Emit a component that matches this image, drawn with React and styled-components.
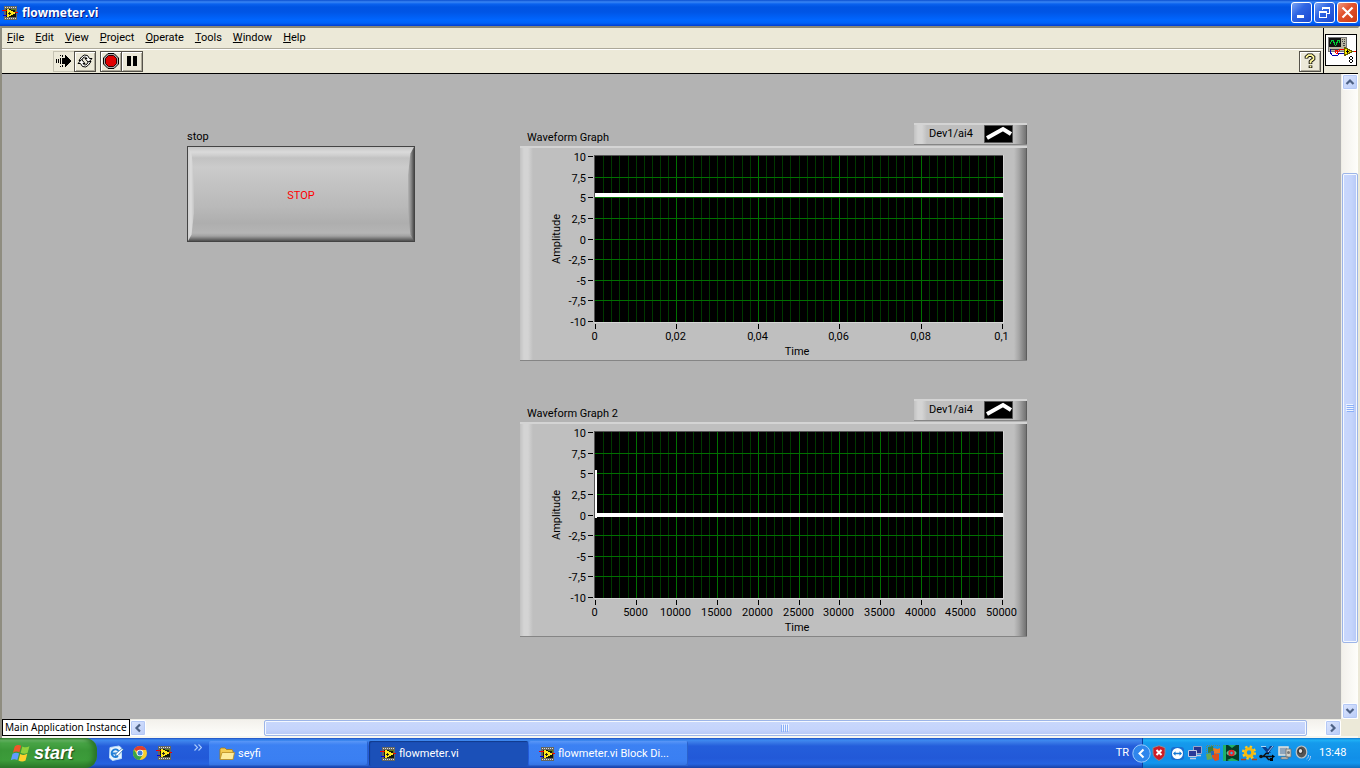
import React from 'react';
import styled, { createGlobalStyle, css } from 'styled-components';

const Global = createGlobalStyle`
  *, *::before, *::after { box-sizing: border-box; }
  html, body, #root { height: 100%; }
  body { margin: 0; font: 11px/14px Roboto, "Liberation Sans", sans-serif; color: #000; overflow: hidden; }
  button { font: inherit; color: inherit; padding: 0; margin: 0; border: 0; background: none; }
  a { color: inherit; text-decoration: none; }
  svg { display: block; flex: none; }
`;

const Desktop = styled.div`
  display: flex;
  flex-direction: column;
  height: 100%;
  min-height: 100%;
`;

const TitleBar = styled.header`
  display: flex;
  align-items: center;
  height: 26px;
  flex: none;
  padding: 0 2px 1px 2px;
  gap: 4px;
  background: linear-gradient(#0a4fd0 0, #3a86f4 2px, #0a62ee 4px, #0054e3 7px, #0055e5 12px, #0066ff 20px, #0062f8 23px, #003dd0 26px);
`;

const Title = styled.h1`
  flex: 1;
  margin: 0;
  font: bold 12px/26px "Open Sans", "Noto Sans", sans-serif;
  color: #fff;
  text-shadow: 1px 1px 0 #0a1883;
`;

const Captions = styled.div`
  display: flex;
  gap: 2px;
`;

const CaptionButton = styled.button`
  display: grid;
  place-items: center;
  width: 21px;
  height: 21px;
  border: 1px solid #fff;
  border-radius: 3px;
  background: ${(p) => (p.$close
    ? 'linear-gradient(135deg, #f09a80, #e2542f 40%, #cc3a12)'
    : 'linear-gradient(135deg, #7ba4f4, #2f66e4 40%, #1a48d0)')};
`;

const Frame = styled.main`
  display: flex;
  flex-direction: column;
  flex: 1;
  min-height: 0;
  border: solid #8f8d80;
  border-width: 2px 0 0 2px;
  border-top-color: #8a8776;
  border-right: 2px solid #ece9d8;
  background: #ece9d8;
`;

const Chrome = styled.div`
  display: flex;
  flex: none;
  border-bottom: 1px solid #000;
`;

const Bars = styled.div`
  flex: 1;
`;

const MenuBar = styled.nav`
  display: flex;
  align-items: center;
  gap: 11px;
  height: 20px;
  padding-left: 5px;
`;

const MenuItem = styled.button`
  line-height: 18px;
`;

const ToolBar = styled.div`
  display: flex;
  align-items: center;
  height: 25px;
  padding: 0 3px 0 51px;
  border-top: 1px solid #aca899;
  box-shadow: inset 0 1px 0 #fff;
`;

const ToolButton = styled.button`
  display: grid;
  place-items: center;
  width: 22px;
  height: 21px;
  margin-right: -1px;
  border: 1px solid #55524a;
  box-shadow: inset 1px 1px 0 #fff, inset -1px -1px 0 #aca899;
  background: #ece9d8;
  ${(p) => p.$flat && css`
    border-color: #c5c2b2;
    box-shadow: none;
  `}
  ${(p) => p.$gap && css`
    margin-left: 5px;
  `}
  ${(p) => p.$end && css`
    margin-left: auto;
  `}
`;

const IconPane = styled.div`
  display: grid;
  place-items: center;
  width: 35px;
  padding-bottom: 2px;
  border-left: 1px solid #000;
`;

const Workspace = styled.div`
  display: flex;
  flex: 1;
  min-height: 0;
`;

const FrontPanel = styled.section`
  display: flex;
  align-items: flex-start;
  flex: 1;
  min-width: 0;
  overflow: hidden;
  padding: 49px 0 0 184px;
  gap: 105px;
  background: #b3b3b3;
`;

const StopControl = styled.div`
  display: flex;
  flex-direction: column;
  padding: 7px 0 0 1px;
  gap: 2px;
`;

const StopButton = styled.button`
  position: relative;
  width: 228px;
  height: 96px;
  padding-top: 3px;
  border: 1px solid #444;
  color: #f00;
  background:
    linear-gradient(#b6b6b600, #a2a2a2 3px, #4e4e4e 8px) bottom / 100% 8px no-repeat,
    linear-gradient(#c6c6c6, #dadada 5px, #d0d0d0 8px, #c2c2c2 11px, #cbcbcb 20px, #c6c6c6 30px, #b9b9b9 60px, #aeaeae 76px, #b6b6b6 88px);

  &::before, &::after {
    content: '';
    position: absolute;
    top: 0;
    bottom: 0;
    width: 6px;
  }
  &::before {
    left: 0;
    background: linear-gradient(90deg, #d0d0d0, #dcdcdc 3px, #c4c4c4 6px);
    clip-path: polygon(0 0, 60% 7%, 100% 30%, 100% 70%, 60% 93%, 0 100%);
  }
  &::after {
    right: 0;
    background: linear-gradient(90deg, #b4b4b4, #8a8a8a 3px, #4a4a4a 6px);
    clip-path: polygon(100% 0, 40% 7%, 0 30%, 0 70%, 40% 93%, 100% 100%);
  }
`;

const GraphColumn = styled.div`
  display: flex;
  flex-direction: column;
  gap: 38px;
`;

const GraphBlock = styled.figure`
  margin: 0;
  width: 507px;
`;

const GraphHead = styled.figcaption`
  display: flex;
  align-items: flex-start;
  justify-content: space-between;
  height: 23px;
  padding-left: 7px;
  line-height: 30px;
`;

const raised = css`
  border-top: 2px solid #d4d4d4;
  border-bottom: 1px solid #858585;
  background:
    linear-gradient(90deg, #c2c2c2, #d4d4d4 4px, #d4d4d4 8px, #bfbfbf 13px) left / 13px 100% no-repeat,
    linear-gradient(90deg, #bfbfbf, #a5a5a5 5px, #888 9px, #737373 12px, #484848 13px) right / 13px 100% no-repeat,
    #bfbfbf;
`;

const Legend = styled.div`
  ${raised}
  display: flex;
  align-items: flex-start;
  justify-content: space-between;
  width: 113px;
  height: 22px;
  padding: 0 14px 0 15px;
  line-height: 18px;
`;

const GraphBody = styled.div`
  ${raised}
  height: 215px;
`;

const scrollFace = css`
  border: 1px solid #fff;
  border-radius: 2px;
  box-shadow: inset 0 0 0 1px #b4c8f6;
`;

const ScrollRail = styled.div`
  display: flex;
  flex: ${(p) => (p.$vertical ? 'none' : '1')};
  flex-direction: ${(p) => (p.$vertical ? 'column' : 'row')};
  ${(p) => (p.$vertical ? 'width' : 'height')}: 17px;
  border: solid #eeede5;
  border-width: ${(p) => (p.$vertical ? '0 0 0 1px' : '1px 0 0 0')};
  background: linear-gradient(${(p) => (p.$vertical ? '90deg' : '180deg')}, #f3f1ec, #fefefb);
`;

const ScrollArrow = styled.button`
  ${scrollFace}
  display: grid;
  place-items: center;
  flex: none;
  width: 16px;
  height: 16px;
  background: linear-gradient(135deg, #dce6fe, #b9cbf7);
`;

const ScrollGap = styled.div`
  flex: ${(p) => p.$grow} 1 0;
`;

const ScrollThumb = styled.div`
  ${scrollFace}
  display: grid;
  place-items: center;
  flex: ${(p) => p.$grow} 1 0;
  border-color: #9db5e8;
  box-shadow: inset 0 0 0 1px #f4f8ff;
  background: linear-gradient(${(p) => (p.$vertical ? '90deg' : '180deg')}, #c9d8fc, #c5d4fc 60%, #b6c8f6);
`;

const Footer = styled.div`
  display: flex;
  flex: none;
  height: 19px;
  padding-right: 17px;
  border-bottom: 2px solid #f7f6ef;
`;

const Instance = styled.div`
  width: 128px;
  height: 17px;
  padding-left: 2px;
  border: 1px solid #000;
  background: #fff;
  font: 10px/14px "Noto Sans", sans-serif;
  white-space: nowrap;
`;

const TaskBar = styled.footer`
  display: flex;
  flex: none;
  height: 30px;
  color: #fff;
  background: linear-gradient(#1f4fc0 0, #3d8af0 2px, #3a7ce8 4px, #245edb 8px, #2259d8 20px, #2563e0 26px, #1941a5 30px);
`;

const StartButton = styled.button`
  display: flex;
  align-items: center;
  gap: 4px;
  width: 97px;
  padding: 0 0 0 10px;
  border-radius: 0 12px 12px 0;
  font: italic bold 18px/28px "Liberation Sans", sans-serif;
  text-shadow: 1px 1px 1px #22491c;
  background: linear-gradient(#2f7d2c 0, #6cb86a 2px, #48a446 5px, #3a9738 12px, #3c9c3a 22px, #2c7a2a 30px);
  box-shadow: inset -4px 0 5px #2a7427;
`;

const QuickLaunch = styled.div`
  display: flex;
  align-items: center;
  gap: 8px;
  width: 112px;
  padding-left: 11px;
`;

const QuickLink = styled.a`
  display: block;
`;

const More = styled.button`
  align-self: flex-start;
  margin: 6px 0 0 14px;
`;

const Tasks = styled.div`
  display: flex;
  align-items: center;
  flex: 1;
  gap: 1px;
`;

const TaskButton = styled.button`
  display: flex;
  align-items: center;
  gap: 3px;
  width: 159px;
  height: 25px;
  margin-top: 1px;
  padding-left: 10px;
  border-radius: 2px;
  background: linear-gradient(#5a97f7, #3c81f3 4px, #3a7ff2 20px, #3472e0);
  box-shadow: inset -1px -1px 0 #2b62cc;
  ${(p) => p.$active && css`
    padding: 1px 0 0 11px;
    background: #1b50b8;
    box-shadow: inset 1px 1px 1px #123a8c;
  `}
`;

const Lang = styled.div`
  display: flex;
  align-items: center;
  padding: 0 13px 0 3px;
`;

const Tray = styled.div`
  display: flex;
  align-items: center;
  gap: 2px;
  width: 218px;
  border-left: 1px solid #0a3f9f;
  background: linear-gradient(#0f78d0 0, #1fb0f5 2px, #159aec 5px, #118fe8 20px, #1296ee 25px, #0d6fc0 30px);
`;

const TrayToggle = styled.button`
  margin: 0 -2px 0 -11px;
`;

const Clock = styled.time`
  margin-left: 6px;
`;

const LabViewIcon = ({ size = 16 }) => (
  <svg width={size} height={size} viewBox="0 0 16 16" shapeRendering="crispEdges">
    <path fill="#66675f" d="M2 1h13v14H2z" />
    <path stroke="#ddd" strokeDasharray="1 1" d="M3 2.5h12M3 13.5h12" />
    <path fill="#10160c" d="M4 4h10v8H4z" />
    <path stroke="#5c7a20" d="M9 4.500h4v2" fill="none" />
    <path stroke="#e00" d="M0 5.500h5M12 7.500h4" />
    <path stroke="#00d" d="M1 10.500h4" />
    <path fill="#ffe81c" d="M5 4h2v1h2v1h2v1h2v2h-2v1H9v1H7v1H5z" />
    <path stroke="#222" d="M6 8.500h3M7.500 7v3" />
  </svg>
);

const VIIcon = () => (
  <svg width="32" height="32" viewBox="0 0 32 32" shapeRendering="crispEdges">
    <path fill="#fff" stroke="#000" d="M.5.5h31v31H.5z" />
    <path fill="#b9b5a2" stroke="#777" d="M3.5 3.5h18v14h-18z" />
    <path fill="#111" d="M4 4h12v9H4z" />
    <path fill="none" stroke="#00cf35" d="M5 10l2-4h1l2 5h1l2-5h1l1 3" />
    <path stroke="#444" d="M17 5h1M19 5h1M17 7h1M19 7h1M18 9.500h2M18 11.500h2M5 15h10" />
    <path fill="none" stroke="#0000b0" d="M5.500 15v4l2 2.500h5l2-2.500h4" />
    <path fill="none" stroke="#f00" d="M10.500 19v-3h2v3h-2M13 18l2-2.500h4M27 17.500h4" />
    <path fill="#fff200" stroke="#6b6000" d="M19.500 13.500l8 4-8 4z" />
    <path stroke="#000" d="M21 17.500h3M22.500 16v3" />
    <path fill="none" stroke="#000" d="M25 22.500h2M25 25.500h2M25 28.500h2M24.500 23v2M27.500 23v2M24.500 26v2M27.500 26v2" />
  </svg>
);

const Chevron = ({ turn = 0 }) => (
  <svg width="10" height="10" viewBox="0 0 10 10">
    <path transform={`rotate(${turn} 5 5)`} fill="none" stroke="#4d6185" strokeWidth="2.2" d="M1.5 7L5 3.5 8.5 7" />
  </svg>
);

const Grip = ({ vertical }) => (
  <svg width="8" height="8" viewBox="0 0 8 8" shapeRendering="crispEdges">
    <g transform={vertical ? undefined : 'rotate(90 4 4)'}>
      <path stroke="#eef4fe" d="M0 .5h7M0 2.5h7M0 4.5h7M0 6.5h7" />
      <path stroke="#8cb0f8" d="M1 1.5h7M1 3.5h7M1 5.5h7M1 7.5h7" />
    </g>
  </svg>
);

const RunIcon = () => (
  <svg width="16" height="14" viewBox="0 0 16 14" shapeRendering="crispEdges">
    <path d="M0 5h1v4H0zM2 5h1v4H2zM4 4h1v6H4zM4 1h1v1H4zM6 1h1v2H6zM4 12h1v1H4zM6 11h1v2H6zM6 4h3V1h1v1h1v1h1v1h1v1h1v1h1v2h-1v1h-1v1h-1v1h-1v1h-1v1H9v-3H6z" />
  </svg>
);

const LoopIcon = () => (
  <svg width="16" height="16" viewBox="0 0 16 16">
    <g id="loop-half">
      <path fill="#fff" stroke="#000" d="M2 7.500L4.500 4Q7 .8 10.500 2.500L12.500 5.500H15L11.500 9.500 8 5.500h2L8.500 4Q7 3.800 6 5L4.500 7.500z" />
    </g>
    <use href="#loop-half" transform="rotate(180 8 8)" />
  </svg>
);

const StopIcon = () => (
  <svg width="16" height="16" viewBox="0 0 16 16">
    <path fill="#aaa" stroke="#000" d="M5 .5h6L15.500 5v6L11 15.500H5L.5 11V5z" />
    <path fill="#e00000" stroke="#300" d="M5.500 2.500h5l3 3v5l-3 3h-5l-3-3v-5z" />
  </svg>
);

const PauseIcon = () => (
  <svg width="10" height="10" viewBox="0 0 10 10"><path d="M0 0h4v10H0zM6 0h4v10H6z" /></svg>
);

const HelpIcon = () => (
  <svg width="12" height="16" viewBox="0 0 12 16">
    <path fill="none" stroke="#000" strokeWidth="3.600" d="M2.500 5.500V4l2-1.800h3l2 1.800v2L6.500 8.500V11M6.500 12.500v2.500" />
    <path fill="none" stroke="#fff79a" strokeWidth="1.800" d="M2.500 5V4l2-1.800h3l2 1.800v2L6.500 8.500v2M6.500 12.800v1.600" />
  </svg>
);

const WindowsFlag = () => (
  <svg width="20" height="19" viewBox="0 1 17 16">
    <path fill="#f0562a" d="M4 3c2-1.500 4-1.500 5.500-.5L8 8C6 7 4.300 7.200 2.500 8.300z" />
    <path fill="#8fd13c" d="M10.500 3c2 1 4 1 6-.2L15 8.300c-2 1.200-4 1-6 0z" />
    <path fill="#5f9cff" d="M2.200 9.300c2-1 3.600-1.200 5.500-.3L6.200 14.500c-2-1-3.800-.8-5.500.3z" />
    <path fill="#ffd02c" d="M8.700 9.500c2 1 4 1 6-.2L13.200 15c-2 1.200-4 1-6 0z" />
  </svg>
);

const MailIcon = () => (
  <svg width="16" height="16" viewBox="0 0 16 16">
    <path fill="#e9f4fd" stroke="#b8dcf8" d="M2 2.500l9-1.500 2.500 2v10.500L4.500 15.500 1.500 13z" />
    <path fill="none" stroke="#1f7fd8" strokeWidth="1.800" d="M10.500 6A3.800 3.800 0 1 0 10 11M4.500 8.500h6" />
    <path fill="#fff" stroke="#236db4" strokeWidth=".8" d="M8 8.500l6-5 1.500 1-5.500 6-2.500.5z" />
  </svg>
);

const ChromeIcon = () => (
  <svg width="16" height="16" viewBox="0 0 16 16">
    <circle cx="8" cy="8" r="7" fill="#f7cf2d" />
    <path fill="#df3f2f" d="M8 8L2 4.400A7 7 0 0 1 14.300 5H8z" />
    <path fill="#39a44a" d="M1.900 4.500A7 7 0 0 0 7.500 15L11 9.500 5 9.500z" />
    <circle cx="8" cy="8" r="3.300" fill="#fff" />
    <circle cx="8" cy="8" r="2.500" fill="#3d7fd9" />
  </svg>
);

const FolderIcon = () => (
  <svg width="16" height="16" viewBox="0 0 16 16">
    <path fill="#f3cb52" stroke="#a57a12" strokeWidth=".8" d="M1 13V3l1-1h4l1.500 1.500H13L14 5v8z" />
    <path fill="#fdeb9c" stroke="#b98c20" strokeWidth=".8" d="M1 13.500L3 6.500h12.500l-1.500 7z" />
  </svg>
);

const ToggleIcon = () => (
  <svg width="19" height="19" viewBox="0 0 19 19">
    <circle cx="9.500" cy="9.500" r="8.700" fill="#2f86ec" stroke="#9ccbfb" />
    <path fill="none" stroke="#fff" strokeWidth="2" d="M11.500 5.500l-4 4 4 4" />
  </svg>
);

const ShieldIcon = () => (
  <svg width="16" height="16" viewBox="0 0 16 16">
    <path fill="#cf1c25" stroke="#8e8a90" d="M8 .7l6 2v5c0 4-3 6.300-6 7.800-3-1.500-6-3.800-6-7.800v-5z" />
    <path stroke="#fff" strokeWidth="2" d="M5.500 5l5 5M10.500 5l-5 5" />
  </svg>
);

const TeamIcon = () => (
  <svg width="16" height="16" viewBox="0 0 16 16">
    <rect x="2" y="2" width="13" height="13" rx="3" fill="#1a6fd0" />
    <circle cx="8.500" cy="8.500" r="5.500" fill="#fff" />
    <path fill="#1478d4" d="M4 8.500L6.500 6.300v1.400h4V6.300L13 8.500l-2.500 2.200V9.300h-4v1.400z" />
  </svg>
);

const NetworkIcon = () => (
  <svg width="16" height="16" viewBox="0 0 16 16">
    <path fill="#26348c" stroke="#9aa4c8" d="M6.500 1.500h8v7h-8z" />
    <path fill="#2a3a98" stroke="#c3cbe2" d="M1.500 5.500h8v6h-8z" />
    <path stroke="#c3cbe2" strokeWidth="1.500" d="M3 13.500h6M10 10.500h4" />
  </svg>
);

const PuzzleIcon = () => (
  <svg width="16" height="16" viewBox="0 0 16 16">
    <path stroke="#6e8a5c" strokeDasharray="1 1" d="M2 .5h13M1.500 1v9" />
    <path fill="#3f7d3a" d="M3 2l5-1 1 6-6 1z" /><path fill="#ef7a22" d="M8 3l5 1 2-1v5L9 9z" />
    <path fill="#6aa84f" d="M1 9l5-1 1 6-5 1z" /><path fill="#e0501c" d="M7 8l7 1v6l-4 1-3-4z" />
    <path fill="#2d67b4" d="M6 6h3v4H6z" />
  </svg>
);

const DisplayIcon = () => (
  <svg width="16" height="16" viewBox="0 0 16 16">
    <path fill="#073c28" d="M0 0h16v16H0z" />
    <path fill="#1fb169" d="M0 0h3v16H0zM5 0h8L9 3zM4 15l5-2 7 3H6z" />
    <ellipse cx="8.500" cy="8" rx="5" ry="3" fill="#4fc796" />
    <circle cx="8.500" cy="8" r="3.200" fill="#e5262a" /><circle cx="8.500" cy="8" r="1.200" fill="#31b4e8" />
  </svg>
);

const GearIcon = () => (
  <svg width="16" height="16" viewBox="0 0 16 16">
    <circle cx="8" cy="7.500" r="5.800" fill="none" stroke="#ffc91c" strokeWidth="2.500" strokeDasharray="2.300 2.250" />
    <circle cx="8" cy="7.500" r="3.700" fill="none" stroke="#f7b90d" strokeWidth="3" />
    <path stroke="#b64412" strokeWidth="1.500" d="M0 14.500h5M11 14.500h5" />
  </svg>
);

const UsbIcon = () => (
  <svg width="16" height="16" viewBox="0 0 16 16">
    <path fill="#0b3f8c" d="M3 2h4l5 6H8zM11 1h4l-6 8H6z" />
    <path stroke="#cfe4fa" strokeWidth=".8" d="M2 1.500h5M9 7l5-6" />
    <path fill="none" stroke="#111" strokeWidth="1.400" d="M1 11.500h13M4 11.500L7 8.500h3M7 11.500l2.500 3H12" />
    <circle cx="2" cy="11.500" r="1.800" fill="#111" /><path d="M13 9.500l3 2-3 2zM11 13h3v3h-3z" />
  </svg>
);

const DeviceIcon = () => (
  <svg width="16" height="16" viewBox="0 0 16 16">
    <path fill="#8ea6bd" stroke="#e3e3de" strokeWidth="1.500" d="M2 2h9v8H2z" />
    <path fill="#d4d2c8" stroke="#6e6e6e" strokeWidth=".8" d="M9 4h5v8H9zM4 12h7v2H4z" />
    <circle cx="11.500" cy="7.500" r="1.500" fill="#777" />
  </svg>
);

const SpeakerIcon = () => (
  <svg width="16" height="16" viewBox="0 0 16 16">
    <ellipse cx="6.500" cy="7" rx="5.300" ry="6" fill="#545454" stroke="#bfc3c5" strokeWidth="1.200" />
    <circle cx="5.500" cy="6" r="2.400" fill="#dedede" stroke="#222" />
    <path fill="none" stroke="#a8cef5" d="M11.500 14c1.500-1 2-2 2-4M13.500 15.500c1.500-1 2-2.500 2-4.500" />
  </svg>
);

const Y_LABELS = ['10', '7,5', '5', '2,5', '0', '-2,5', '-5', '-7,5', '-10'];
const PLOT = { x: 75, y: 8, width: 407, height: 165 };

function Graph({ title, xLabels, children }) {
  const { x, y, width, height } = PLOT;
  const majorEvery = 50 / (xLabels.length - 1);
  const vx = (i, n) => Math.round(x + (width * i) / n) + 0.5;
  const hy = (i) => Math.round(y + (height * i) / 8) + 0.5;
  return (
    <GraphBlock>
      <GraphHead>
        {title}
        <Legend>
          Dev1/ai4
          <svg width="29" height="18" viewBox="0 0 29 18">
            <path fill="#000" stroke="#555" d="M.5.5h28v17H.5z" />
            <path fill="none" stroke="#fff" strokeWidth="4" d="M3 13L19 4l8 5" />
          </svg>
        </Legend>
      </GraphHead>
      <GraphBody>
        <svg width="507" height="212" viewBox="0 0 507 212" role="img" aria-label={title}>
          <g shapeRendering="crispEdges">
            <path fill="#d6d6d6" d="M74 7h410v168H74z" />
            <path fill="#555" d="M74 7h409v167H74z" />
            <path fill="#000" d={`M${x} ${y}h408v166H${x}z`} />
            {Array.from({ length: 49 }, (_, i) => i + 1).filter((i) => i % majorEvery).map((i) => (
              <line key={i} x1={vx(i, 50)} x2={vx(i, 50)} y1={y} y2={y + 166} stroke="#003800" />
            ))}
            {Y_LABELS.slice(1, -1).map((label, i) => (
              <line key={label} x1={x} x2={x + 408} y1={hy(i + 1)} y2={hy(i + 1)} stroke="#007000" />
            ))}
            {xLabels.slice(1, -1).map((label, i) => (
              <line key={label} x1={vx(i + 1, xLabels.length - 1)} x2={vx(i + 1, xLabels.length - 1)} y1={y} y2={y + 166} stroke="#007000" />
            ))}
            {children}
            {Y_LABELS.map((label, i) => <line key={label} x1="68" x2="73" y1={hy(i)} y2={hy(i)} stroke="#000" />)}
            {xLabels.map((label, i) => (
              <line key={label} x1={vx(i, xLabels.length - 1)} x2={vx(i, xLabels.length - 1)} y1="176" y2="181" stroke="#000" />
            ))}
          </g>
          {Y_LABELS.map((label, i) => <text key={label} x="66" y={hy(i) + 4} textAnchor="end">{label}</text>)}
          {xLabels.map((label, i) => (
            <text key={label} x={vx(i, xLabels.length - 1) - 1} y="192" textAnchor="middle">{label}</text>
          ))}
          <text x="277" y="207" textAnchor="middle">Time</text>
          <text transform="translate(40 91) rotate(-90)" textAnchor="middle">Amplitude</text>
        </svg>
      </GraphBody>
    </GraphBlock>
  );
}

const MENUS = ['File', 'Edit', 'View', 'Project', 'Operate', 'Tools', 'Window', 'Help'];
const TRAY = [ShieldIcon, TeamIcon, NetworkIcon, PuzzleIcon, DisplayIcon, GearIcon, UsbIcon, DeviceIcon, SpeakerIcon];

export default function App() {
  return (
    <Desktop>
      <Global />
      <TitleBar>
        <LabViewIcon />
        <Title>flowmeter.vi</Title>
        <Captions>
          <CaptionButton aria-label="Minimize">
            <svg width="13" height="13" viewBox="0 0 13 13"><path fill="#fff" d="M2 9h7v3H2z" /></svg>
          </CaptionButton>
          <CaptionButton aria-label="Restore">
            <svg width="13" height="13" viewBox="0 0 13 13" fill="none" stroke="#fff" shapeRendering="crispEdges">
              <path d="M4.500 4V1.500h7v6H9M4 2.500h8M1.500 5.500h7v6h-7zM1 6.500h8" />
            </svg>
          </CaptionButton>
          <CaptionButton $close aria-label="Close">
            <svg width="13" height="13" viewBox="0 0 13 13"><path stroke="#fff" strokeWidth="2.200" d="M1.500 1.500l10 10M11.500 1.500l-10 10" /></svg>
          </CaptionButton>
        </Captions>
      </TitleBar>

      <Frame>
        <Chrome>
          <Bars>
            <MenuBar>
              {MENUS.map((name) => <MenuItem key={name}><u>{name[0]}</u>{name.slice(1)}</MenuItem>)}
            </MenuBar>
            <ToolBar>
              <ToolButton $flat aria-label="Run"><RunIcon /></ToolButton>
              <ToolButton aria-label="Run continuously"><LoopIcon /></ToolButton>
              <ToolButton $gap aria-label="Abort"><StopIcon /></ToolButton>
              <ToolButton aria-label="Pause"><PauseIcon /></ToolButton>
              <ToolButton $end aria-label="Help"><HelpIcon /></ToolButton>
            </ToolBar>
          </Bars>
          <IconPane><VIIcon /></IconPane>
        </Chrome>

        <Workspace>
          <FrontPanel>
            <StopControl>
              <label htmlFor="stop">stop</label>
              <StopButton id="stop">STOP</StopButton>
            </StopControl>
            <GraphColumn>
              <Graph title="Waveform Graph" xLabels={['0', '0,02', '0,04', '0,06', '0,08', '0,1']}>
                <path fill="#fff" d="M75 45h408v4H75z" />
              </Graph>
              <Graph
                title="Waveform Graph 2"
                xLabels={['0', '5000', '10000', '15000', '20000', '25000', '30000', '35000', '40000', '45000', '50000']}
              >
                <path fill="#fff" d="M75 46h2v43h406v4H77v1h-2z" />
              </Graph>
            </GraphColumn>
          </FrontPanel>
          <ScrollRail $vertical>
            <ScrollArrow aria-label="Scroll up"><Chevron /></ScrollArrow>
            <ScrollGap $grow={83} />
            <ScrollThumb $vertical $grow={469}><Grip vertical /></ScrollThumb>
            <ScrollGap $grow={60} />
            <ScrollArrow aria-label="Scroll down"><Chevron turn={180} /></ScrollArrow>
          </ScrollRail>
        </Workspace>

        <Footer>
          <Instance>Main Application Instance</Instance>
          <ScrollRail>
            <ScrollArrow aria-label="Scroll left"><Chevron turn={-90} /></ScrollArrow>
            <ScrollGap $grow={118} />
            <ScrollThumb $grow={1042}><Grip /></ScrollThumb>
            <ScrollGap $grow={18} />
            <ScrollArrow aria-label="Scroll right"><Chevron turn={90} /></ScrollArrow>
          </ScrollRail>
        </Footer>
      </Frame>

      <TaskBar>
        <StartButton><WindowsFlag />start</StartButton>
        <QuickLaunch>
          <QuickLink href="#mail" aria-label="Mail"><MailIcon /></QuickLink>
          <QuickLink href="#chrome" aria-label="Chrome"><ChromeIcon /></QuickLink>
          <QuickLink href="#labview" aria-label="LabVIEW"><LabViewIcon /></QuickLink>
          <More aria-label="More">
            <svg width="8" height="7" viewBox="0 0 8 7"><path fill="none" stroke="#a9cbfb" strokeWidth="1.200" d="M.5 .5l3 3-3 3M4.500 .5l3 3-3 3" /></svg>
          </More>
        </QuickLaunch>
        <Tasks>
          <TaskButton><FolderIcon />seyfi</TaskButton>
          <TaskButton $active><LabViewIcon />flowmeter.vi</TaskButton>
          <TaskButton><LabViewIcon />flowmeter.vi Block Di...</TaskButton>
        </Tasks>
        <Lang>TR</Lang>
        <Tray>
          <TrayToggle aria-label="Hidden icons"><ToggleIcon /></TrayToggle>
          {TRAY.map((Icon, i) => <Icon key={i} />)}
          <Clock>13:48</Clock>
        </Tray>
      </TaskBar>
    </Desktop>
  );
}
